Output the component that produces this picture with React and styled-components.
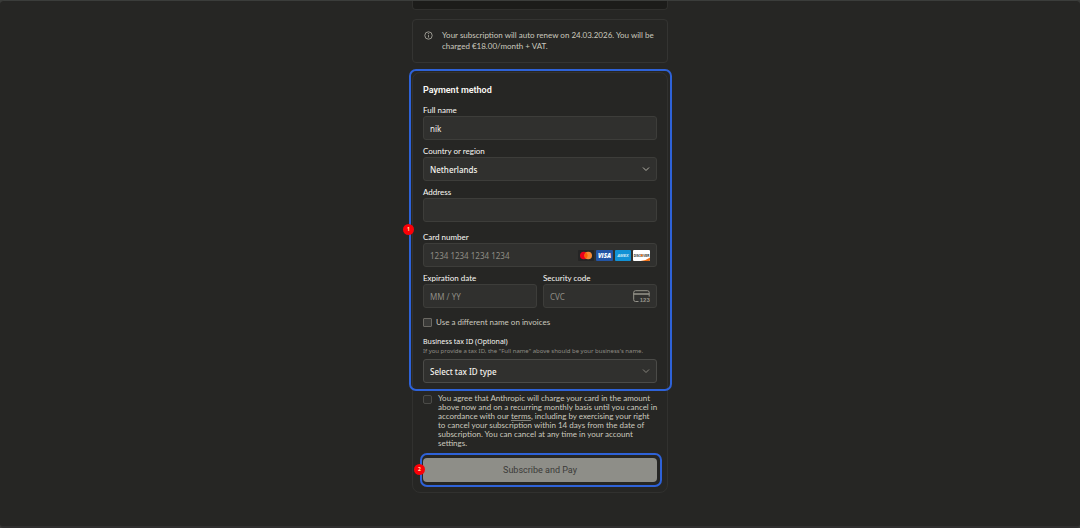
import React, { useState } from 'react'
import styled, { createGlobalStyle } from "styled-components";

const GlobalStyle = createGlobalStyle`
* {
  box-sizing: border-box;
}

body {
  margin: 0;
  background-color: #3b3c3a;
  font-family: "Noto Sans", "Open Sans", sans-serif;
}
`;

const Page = styled.div`
min-height: 100vh;
display: flex;
flex-direction: column;
align-items: center;
background-color: #262624;
border-top: 1px solid #3b3d3b;
border-bottom: 2px solid #302f2f;
border-radius: 4px;
`;

const Column = styled.main`
width: 100%;
max-width: 256px;
display: flex;
flex-direction: column;
gap: 9px;
`;

const Summary = styled.div`
height: 9px;
background-color: #1c1c1a;
border: 1px solid #30302e;
border-top: none;
border-radius: 0 0 4px 4px;
`;

const Notice = styled.div`
display: flex;
gap: 9px;
padding: 10px 11px;
border: 1px solid #343432;
border-radius: 4px;
`;

const NoticeText = styled.p`
margin: 0;
font-family: Lato, sans-serif;
font-size: 8px;
line-height: 11px;
color: #cbc9bf;
`;

const Card = styled.form`
border: 1px solid #31312f;
border-radius: 8px;
`;

const Section = styled.section`
position: relative;
display: flex;
flex-direction: column;
padding: ${props => props.$padding};
`;

const Highlight = styled.div`
position: absolute;
inset: ${props => props.$inset};
border: 2px solid #2e62d8;
border-radius: 7px;
pointer-events: none;
`;

const Marker = styled.span`
position: absolute;
top: 50%;
left: -8px;
width: 11px;
height: 11px;
margin-top: -6px;
border-radius: 50%;
background-color: #fb0007;
color: #ffe9a8;
font-size: 5px;
font-weight: 700;
line-height: 11px;
text-align: center;
`;

const Title = styled.h2`
margin: 0 0 9px;
font-family: Roboto, sans-serif;
font-size: 9px;
font-weight: 600;
line-height: 12px;
color: #faf9f5;
`;

const Fields = styled.div`
display: flex;
flex-direction: column;
gap: 6px;
margin-bottom: ${props => props.$space};
`;

const FieldRow = styled.div`
display: grid;
grid-template-columns: 1fr 1fr;
gap: 6px;
`;

const Field = styled.div`
display: flex;
flex-direction: column;
min-width: 0;
`;

const Label = styled.label`
margin-bottom: 1px;
font-family: ${props => props.$compact ? "inherit" : "Lato, sans-serif"};
font-size: ${props => props.$compact ? "7px" : "8px"};
line-height: 10px;
color: #faf9f5;
`;

const Hint = styled.p`
margin: -1px 0 3px;
font-size: 6px;
line-height: 9px;
color: #8f8d85;
white-space: nowrap;
`;

const Control = styled.div`
display: flex;
align-items: center;
height: 24px;
padding-right: 6px;
background-color: #30302e;
border: 1px solid ${props => props.$strong ? "#4b4b48" : "#3d3d3a"};
border-radius: 3px;
`;

const Input = styled.input`
flex: 1;
min-width: 0;
height: 22px;
padding: 0 6px;
border: none;
outline: none;
background: transparent;
font-family: inherit;
font-size: 8px;
color: #f5f4ee;

&::placeholder {
  color: #8f8d85;
  opacity: 1;
}
`;

const Select = styled.select`
flex: 1;
min-width: 0;
height: 22px;
padding: 0 6px;
border: none;
outline: none;
appearance: none;
background: transparent;
font-family: inherit;
font-size: 8px;
font-weight: 500;
color: #f5f4ee;
`;

const Brands = styled.div`
display: flex;
gap: 2px;
`;

const CheckRow = styled.div`
display: flex;
align-items: ${props => props.$top ? "flex-start" : "center"};
gap: ${props => props.$top ? "6px" : "4px"};
`;

const Checkbox = styled.input`
flex: none;
width: 9px;
height: 9px;
margin: ${props => props.$top ? "1px 0 0" : "0"};
appearance: none;
background-color: ${props => props.$top ? "#2c2c2a" : "#3a3a38"};
border: 1px solid ${props => props.$top ? "#4b4b48" : "#6b6963"};
border-radius: ${props => props.$top ? "2px" : "1px"};

&:checked {
  background-color: #2c5fd0;
}
`;

const CheckLabel = styled.label`
font-family: Lato, sans-serif;
font-size: 8px;
line-height: ${props => props.$lineHeight};
color: #cbc9bf;
`;

const TermsLink = styled.a`
color: inherit;
text-decoration: underline;
text-decoration-color: #85837b;
text-underline-offset: 1px;
`;

const Button = styled.button`
width: 100%;
height: 24px;
padding: 0;
border: none;
border-radius: 4px;
background-color: #8e8e88;
color: #3b3b38;
font-family: Roboto, sans-serif;
font-size: 9px;
font-weight: 400;
cursor: pointer;
`;

const Icon = styled.svg`
flex: none;
margin-top: 1px;
`;

const InfoIcon = () => (
  <Icon width="9" height="9" viewBox="0 0 18 18" fill="none" stroke="#b5b3a9" strokeWidth="1.6">
    <circle cx="9" cy="9" r="7.4" />
    <path d="M9 8.2V13" />
    <circle cx="9" cy="5.4" r="0.5" fill="#b5b3a9" />
  </Icon>
)

const Chevron = ({ color }) => (
  <svg width="8" height="8" viewBox="0 0 8 8" fill="none" stroke={color} strokeWidth="1">
    <path d="M1 2.5L4 5.5L7 2.5" />
  </svg>
)

const Mastercard = () => (
  <svg width="16" height="11" viewBox="0 0 16 11">
    <rect width="16" height="11" rx="1" fill="#252525" />
    <circle cx="5.8" cy="5.5" r="3.8" fill="#eb001b" />
    <circle cx="10.2" cy="5.5" r="3.8" fill="#f58a34" />
    <path d="M8 2.4A3.8 3.8 0 0 1 8 8.6A3.8 3.8 0 0 1 8 2.4Z" fill="#ff5f00" />
  </svg>
)

const Visa = () => (
  <svg width="17" height="11" viewBox="0 0 17 11">
    <rect width="17" height="11" rx="1" fill="#2355a5" />
    <text x="8.5" y="7.7" textAnchor="middle" fontFamily="Open Sans" fontWeight="800" fontStyle="italic" fontSize="6" fill="#fff">VISA</text>
  </svg>
)

const Amex = () => (
  <svg width="16" height="11" viewBox="0 0 16 11">
    <rect width="16" height="11" rx="1" fill="#1292d5" />
    <text x="8" y="7" textAnchor="middle" fontFamily="Liberation Sans" fontWeight="700" fontStyle="italic" fontSize="4" fill="#d5ecf8">AMEX</text>
  </svg>
)

const Discover = () => (
  <svg width="17" height="11" viewBox="0 0 17 11">
    <rect width="17" height="11" rx="1" fill="#fff" />
    <path d="M17 7.4V10Q17 11 16 11H7.5Q13.5 10.2 17 7.4Z" fill="#f47216" />
    <text x="8.5" y="6.5" textAnchor="middle" fontFamily="Liberation Sans" fontWeight="700" fontSize="3" fill="#201d1c">DISCOVER</text>
    <circle cx="8.6" cy="5.4" r="1.1" fill="#f47216" />
  </svg>
)

const CvcIcon = () => (
  <svg width="17" height="13" viewBox="0 0 17 13" fill="none" stroke="#96948b" strokeWidth="1">
    <path d="M5.5 11.5H2.5Q0.7 11.5 0.7 9.7V2.5Q0.7 0.7 2.5 0.7H14.4Q16.2 0.7 16.2 2.5V6.6" />
    <path d="M0.7 4H16.2" strokeWidth="1.5" />
    <text x="11.8" y="12.3" textAnchor="middle" fontFamily="Liberation Sans" fontWeight="700" fontSize="6" fill="#96948b" stroke="none">123</text>
  </svg>
)

const App = () => {
  const [name, setName] = useState("nik");
  const [country, setCountry] = useState("Netherlands");
  const [address, setAddress] = useState("");

  const handleSubmit = (e) => {
    e.preventDefault();
  }

  return (
    <>
      <GlobalStyle />
      <Page>
        <Column>
          <Summary />

          <Notice>
            <InfoIcon />
            <NoticeText>
              Your subscription will auto renew on 24.03.2026. You will be charged €18.00/month + VAT.
            </NoticeText>
          </Notice>

          <Card onSubmit={handleSubmit}>
            <Section $padding="11px 10px 4px">
              <Title>Payment method</Title>

              <Fields $space="10px">
                <Field>
                  <Label htmlFor="name">Full name</Label>
                  <Control>
                    <Input id="name" value={name} onChange={e => setName(e.target.value)} />
                  </Control>
                </Field>
                <Field>
                  <Label htmlFor="country">Country or region</Label>
                  <Control>
                    <Select id="country" value={country} onChange={e => setCountry(e.target.value)}>
                      <option>Netherlands</option>
                    </Select>
                    <Chevron color="#b5b3a9" />
                  </Control>
                </Field>
                <Field>
                  <Label htmlFor="address">Address</Label>
                  <Control>
                    <Input id="address" value={address} onChange={e => setAddress(e.target.value)} />
                  </Control>
                </Field>
              </Fields>

              <Fields $space="8px">
                <Field>
                  <Label htmlFor="card">Card number</Label>
                  <Control>
                    <Input id="card" placeholder="1234 1234 1234 1234" />
                    <Brands>
                      <Mastercard />
                      <Visa />
                      <Amex />
                      <Discover />
                    </Brands>
                  </Control>
                </Field>
                <FieldRow>
                  <Field>
                    <Label htmlFor="expiry">Expiration date</Label>
                    <Control>
                      <Input id="expiry" placeholder="MM / YY" />
                    </Control>
                  </Field>
                  <Field>
                    <Label htmlFor="cvc">Security code</Label>
                    <Control>
                      <Input id="cvc" placeholder="CVC" />
                      <CvcIcon />
                    </Control>
                  </Field>
                </FieldRow>
              </Fields>

              <Fields $space="9px">
                <CheckRow>
                  <Checkbox type="checkbox" id="invoice" />
                  <CheckLabel htmlFor="invoice" $lineHeight="12px">Use a different name on invoices</CheckLabel>
                </CheckRow>
              </Fields>

              <Field>
                <Label $compact htmlFor="tax">Business tax ID (Optional)</Label>
                <Hint>If you provide a tax ID, the "Full name" above should be your business's name.</Hint>
                <Control $strong>
                  <Select id="tax">
                    <option>Select tax ID type</option>
                  </Select>
                  <Chevron color="#85837b" />
                </Control>
              </Field>

              <Highlight $inset="-4px -5px -4px -4px">
                <Marker>1</Marker>
              </Highlight>
            </Section>

            <Section $padding="7px 9px 10px 10px">
              <CheckRow $top>
                <Checkbox $top type="checkbox" id="agree" />
                <CheckLabel htmlFor="agree" $lineHeight="9px">
                  You agree that Anthropic will charge your card in the amount above now and on a recurring monthly basis until you cancel in accordance with our <TermsLink href="#terms">terms</TermsLink>, including by exercising your right to cancel your subscription within 14 days from the date of subscription. You can cancel at any time in your account settings.
                </CheckLabel>
              </CheckRow>
            </Section>

            <Section $padding="0 10px 10px">
              <Button type="submit">Subscribe and Pay</Button>
              <Highlight $inset="-5px 5px 5px 7px">
                <Marker>2</Marker>
              </Highlight>
            </Section>
          </Card>
        </Column>
      </Page>
    </>
  )
}

export default App
